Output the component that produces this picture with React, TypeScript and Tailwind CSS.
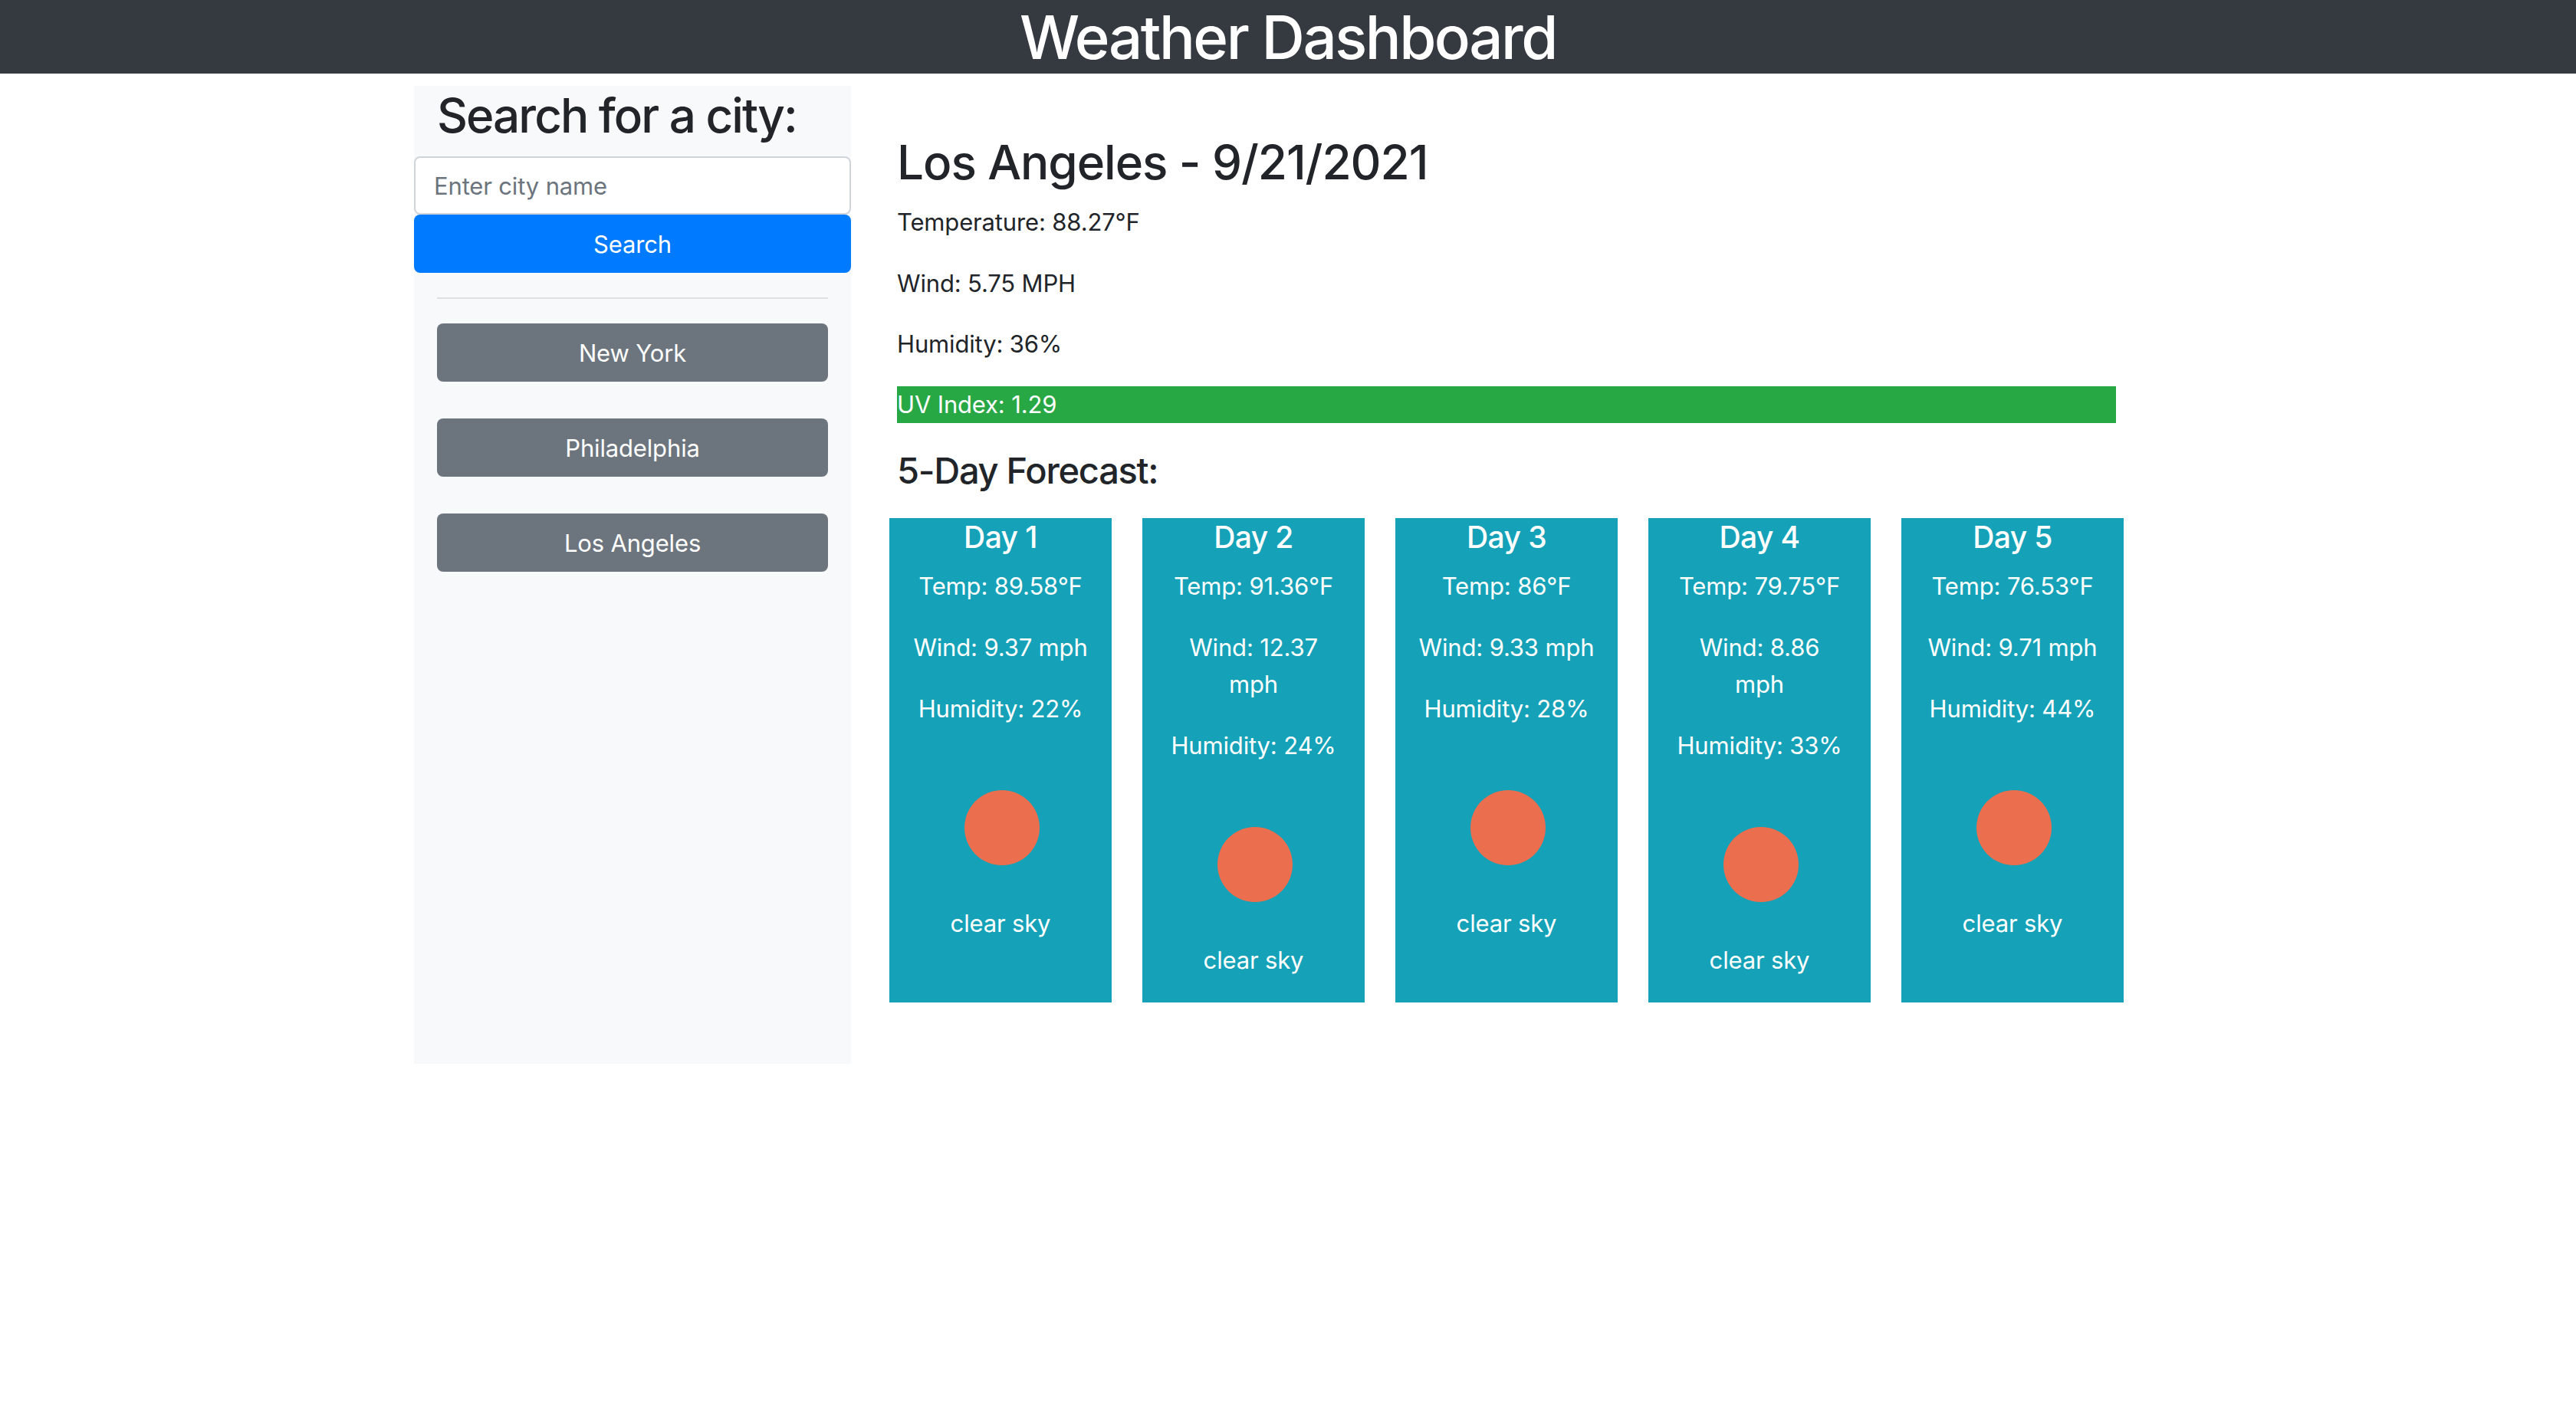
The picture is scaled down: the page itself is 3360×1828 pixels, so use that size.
const cities = ["New York", "Philadelphia", "Los Angeles"];

const days = [
  { day: "Day 1", temp: "Temp: 89.58°F", wind: "Wind: 9.37 mph", humidity: "Humidity: 22%" },
  { day: "Day 2", temp: "Temp: 91.36°F", wind: "Wind: 12.37\nmph", humidity: "Humidity: 24%" },
  { day: "Day 3", temp: "Temp: 86°F", wind: "Wind: 9.33 mph", humidity: "Humidity: 28%" },
  { day: "Day 4", temp: "Temp: 79.75°F", wind: "Wind: 8.86\nmph", humidity: "Humidity: 33%" },
  { day: "Day 5", temp: "Temp: 76.53°F", wind: "Wind: 9.71 mph", humidity: "Humidity: 44%" },
];

export default function App() {
  return (
    <div className="min-h-[1828px] bg-white font-['Inter',sans-serif] text-[31px] leading-[48px] tracking-[-0.005em] text-[#212529]">
      {/* Header */}
      <header className="h-[96px] bg-[#343a40] text-center text-[78px] font-medium leading-[98px] tracking-[-0.032em] text-white">
        Weather Dashboard
      </header>

      <div className="mx-auto mt-[16px] flex w-[2280px]">
        {/* Sidebar */}
        <aside className="flex h-[1276px] w-[570px] flex-col bg-[#f8f9fa]">
          <h2 className="mb-[16px] h-[76px] px-[30px] text-[62px] font-medium leading-[78px] tracking-[-0.032em]">Search for a city:</h2>
          <input
            placeholder="Enter city name"
            className="h-[76px] rounded-[8px] border-2 border-[#ced4da] bg-white px-[24px] text-[31px] tracking-[-0.005em] outline-none placeholder:text-[#6c757d]"
          />
          <button className="h-[76px] rounded-[8px] bg-[#007bff] pt-[2px] text-white">Search</button>
          <div className="px-[30px]">
            <hr className="my-[32px] border-t-2 border-black/10" />
            <div className="flex flex-col gap-[48px]">
              {cities.map((city) => (
                <button key={city} className="h-[76px] rounded-[8px] bg-[#6c757d] pt-[2px] text-white">
                  {city}
                </button>
              ))}
            </div>
          </div>
        </aside>

        {/* Current weather */}
        <main className="w-[1710px] px-[60px] pt-[61px]">
          <h2 className="mb-[16px] text-[62px] font-medium leading-[77px] tracking-[-0.017em]">Los Angeles - 9/21/2021</h2>
          <p className="mb-[32px]">Temperature: 88.27°F</p>
          <p className="mb-[31px]">Wind: 5.75 MPH</p>
          <p className="mb-[31px]">Humidity: 36%</p>
          <p className="mb-[28px] w-[1590px] bg-[#28a745] text-white">UV Index: 1.29</p>
          <h3 className="mb-[29px] text-[47px] font-medium leading-[67px] tracking-[-0.027em]">5-Day Forecast:</h3>

          <div className="-mx-[10px] flex gap-[40px]">
            {days.map((d) => (
              <div key={d.day} className="flex h-[632px] w-[290px] flex-col items-center bg-[#15a2b8] pt-[1px] text-center text-white">
                <h5 className="mb-[16px] text-[39px] font-medium leading-[48px] tracking-[-0.015em]">{d.day}</h5>
                <p className="mb-[32px] whitespace-pre-line">{d.temp}</p>
                <p className="mb-[32px] whitespace-pre-line">{d.wind}</p>
                <p className="mb-[31px] whitespace-pre-line">{d.humidity}</p>
                <div className="mb-[1px] flex h-[200px] w-[200px] items-center justify-center">
                  <div className="ml-[4px] h-[98px] w-[98px] rounded-full bg-[#eb6e4e]" />
                </div>
                <p>clear sky</p>
              </div>
            ))}
          </div>
        </main>
      </div>
    </div>
  );
}
